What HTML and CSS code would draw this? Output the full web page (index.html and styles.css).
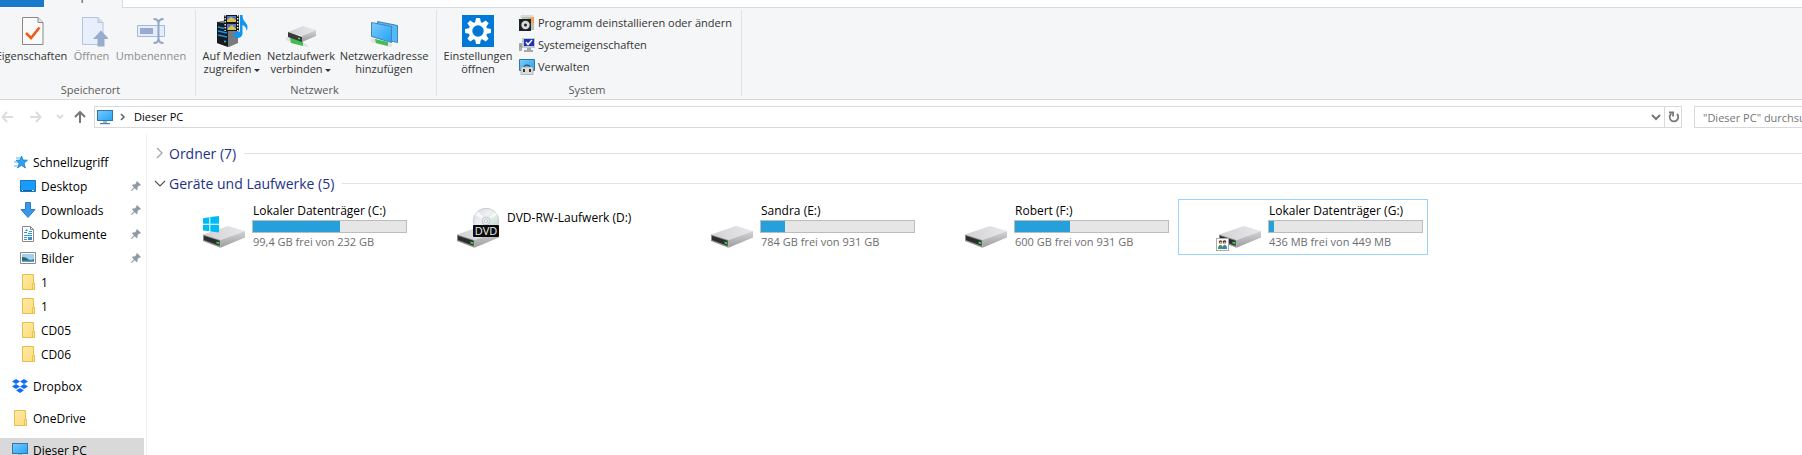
FILE: index.html
```html
<!DOCTYPE html>
<html lang="de">
<head>
  <meta charset="UTF-8">
  <meta name="viewport" content="width=device-width, initial-scale=1.0">
  <title>Dieser PC</title>
  <link rel="stylesheet" href="styles.css">
</head>
<body>
  <!-- shared icons -->
  <svg class="defs" aria-hidden="true">
    <defs>
      <linearGradient id="gTop" x1="0" y1="0" x2="1" y2="0"><stop offset="0" stop-color="#d2d2d5"/><stop offset="1" stop-color="#e8e8ea"/></linearGradient>
      <linearGradient id="gSide" x1="0" y1="0" x2="0" y2="1"><stop offset="0" stop-color="#d4d4d6"/><stop offset="1" stop-color="#9d9da0"/></linearGradient>
      <linearGradient id="gBlue" x1="0" y1="0" x2="1" y2="1"><stop offset="0" stop-color="#7cc9fb"/><stop offset="1" stop-color="#22a5f7"/></linearGradient>
      <linearGradient id="gFolder" x1="0" y1="0" x2="1" y2="1"><stop offset="0" stop-color="#ffeaa5"/><stop offset="1" stop-color="#fbdc7c"/></linearGradient>
      <linearGradient id="gDisc" x1="0" y1="0" x2="1" y2="1"><stop offset="0" stop-color="#d5dade"/><stop offset=".4" stop-color="#eef0f2"/><stop offset=".6" stop-color="#d9eee2"/><stop offset="1" stop-color="#c6c9cf"/></linearGradient>
    </defs>
    <symbol id="drive" viewBox="0 0 42 22">
      <path d="M0 8.400L25 0l17 5-24.500 9z" fill="url(#gTop)"/>
      <path d="M17.500 14L42 5v6.500L17.500 21.800z" fill="url(#gSide)"/>
      <path d="M0 8.400l17.500 5.600v7.800L0 15z" fill="#8c8c8e"/>
      <path d="M1 9.700l15.500 5v5L1 14z" fill="#2c2d30"/>
      <path d="M13.500 15.500l2.500.8v2l-2.500-.8z" fill="#2fe03a"/>
    </symbol>
    <symbol id="pc" viewBox="0 0 16 16">
      <rect x=".5" y="1.500" width="15" height="10" fill="url(#gBlue)" stroke="#3477a5"/>
      <path d="M6 12h4v2H6z" fill="#a8b7c4"/><path d="M3 14h10v1.200H3z" fill="#4a7fa6"/>
    </symbol>
    <symbol id="folder" viewBox="0 0 16 16">
      <path d="M2.500.5h11v9h1v6h-12z" fill="url(#gFolder)" stroke="#e6c04a"/>
      <path d="M12.500 15.500V10l1-1 1 1v5.500z" fill="#ffe694" stroke="#e6c04a"/>
    </symbol>
    <symbol id="pin" viewBox="0 0 10 10">
      <path d="M6 0l4 4-1 .8-.8-.2-1.700 1.700.1 2-.9.900-2-2L.6 10H0v-.6l2.800-3.100-2-2 .9-.9 2 .1 1.700-1.700L5.200 1z" fill="#8f9aa4"/>
    </symbol>
  </svg>

  <header class="tabs">
    <div class="tab-file"></div>
    <div class="tab-active"><span>Computer</span></div>
    <div class="tab-rest"></div>
  </header>

  <section class="ribbon">
    <div class="group group-location">
      <div class="tools">
        <button class="tool tool-properties">
          <svg width="32" height="32" viewBox="0 0 32 32"><path d="M6.500 2.500H22l5 5v22H6.500z" fill="#fafafa" stroke="#8a8a8a"/><path d="M22 2.500v5h5" fill="#e4e4e4" stroke="#8a8a8a"/><path d="M10 18l5 5 8.500-10.500" fill="none" stroke="#f05a14" stroke-width="2.600"/></svg>
          Eigenschaften
        </button>
        <button class="tool tool-open" disabled>
          <svg width="32" height="32" viewBox="0 0 32 32"><path d="M6.500 2.500H22l5 5v22H6.500z" fill="#e7effc" stroke="#b4c3df"/><path d="M22 2.500v5h5" fill="#d4dff1" stroke="#b4c3df"/><path d="M25 15.500l8 8.500h-4.500v7.500h-7V24H17z" fill="#9aacce"/></svg>
          Öffnen
        </button>
        <button class="tool tool-rename" disabled>
          <svg width="32" height="32" viewBox="0 0 32 32"><path d="M2.500 10.500h27v11h-27z" fill="#e4edfb" stroke="#a5b8da"/><path d="M5 13h13v6H5z" fill="#9aacce"/><path d="M18.500 4q5 0 5 4.500v15q0 4.500-5 4.500M28.500 4q-5 0-5 4.500v15q0 4.500 5 4.500" fill="none" stroke="#94a6c8" stroke-width="2"/></svg>
          Umbenennen
        </button>
      </div>
      <div class="group-name">Speicherort</div>
    </div>

    <div class="group group-network">
      <div class="tools">
        <button class="tool tool-media">
          <svg width="32" height="32" viewBox="0 0 32 32"><path d="M1 7l10-2 11 3v20l-9 4-12-4z" fill="#777a7e"/><path d="M1 7l11 2v23L1 28z" fill="#17191c"/><path d="M2 12l9 2M2 16l9 2M2 20l9 2" stroke="#1694e8" stroke-width="1.400"/><circle cx="9" cy="26.500" r="1" fill="#33bfff"/><path d="M8 0h15v16H8z" fill="#16171b"/><path d="M11 1h9v6h-9zM11 9h9v6h-9z" fill="#5577c4"/><path d="M11 5l4-3 5 3v2h-9zM12 13l4-3 4 4v1h-8z" fill="#dcc24d"/><path d="M9.200 0v16M21.700 0v16" stroke="#fff" stroke-width="1.300" stroke-dasharray="1.500 1.500"/><path d="M24 0h2.500q0 5 3 7.500 3.500 4 1 8.500 0-4.500-4-6v9q-1 4-5 4-4-.3-4-3.300 1-3.700 6.500-3.200z" fill="#1296ed"/></svg>
          <span>Auf Medien<br>zugreifen <i class="caret"></i></span>
        </button>
        <button class="tool tool-netdrive">
          <svg width="32" height="32" viewBox="0 0 32 32"><path d="M1 22l5 1 15 6 3 3-4-.5-15-4.500-4-2z" fill="#dfe2e0"/><path d="M5 22.500l13 2.500v6l-12-3z" fill="#43bd52"/><path d="M3 17l15-6 13 4-14 6z" fill="url(#gTop)"/><path d="M3 17l14 5v5L3 22z" fill="#38393c"/><path d="M17 21l14-6v6l-14 6z" fill="url(#gSide)"/><path d="M13 22.500l2 .6v1.500l-2-.6z" fill="#39e847"/></svg>
          <span>Netzlaufwerk<br>verbinden <i class="caret"></i></span>
        </button>
        <button class="tool tool-netaddr">
          <svg width="32" height="32" viewBox="0 0 32 32"><path d="M9.500 6.500l20 4v17l-20-5z" fill="#55b9f6" stroke="#4385b5"/><path d="M3.500 7.500l20 4v16l-20-6z" fill="url(#gBlue)" stroke="#4385b5"/><path d="M2 24l5 0 17 5v3l-5-.5-15-4z" fill="#dfe2e0"/><path d="M7 24l13 3v4l-12-3z" fill="#43bd52"/></svg>
          <span>Netzwerkadresse<br>hinzufügen</span>
        </button>
      </div>
      <div class="group-name">Netzwerk</div>
    </div>

    <div class="group group-system">
      <div class="tools">
        <button class="tool tool-settings">
          <svg width="32" height="32" viewBox="0 0 32 32"><path d="M0 0h32v32H0z" fill="#0078d7"/><g fill="#fff"><path id="tooth" d="M14 3h4l1 5h-6z"/><use href="#tooth" transform="rotate(45 16 16)"/><use href="#tooth" transform="rotate(90 16 16)"/><use href="#tooth" transform="rotate(135 16 16)"/><use href="#tooth" transform="rotate(180 16 16)"/><use href="#tooth" transform="rotate(225 16 16)"/><use href="#tooth" transform="rotate(270 16 16)"/><use href="#tooth" transform="rotate(315 16 16)"/></g><circle cx="16" cy="16" r="7.500" fill="none" stroke="#fff" stroke-width="3.600"/></svg>
          <span>Einstellungen<br>öffnen</span>
        </button>
        <div class="small-tools">
          <button class="small-tool">
            <svg width="16" height="16" viewBox="0 0 16 16"><path d="M2 0h12l1 3H1z" fill="#d7dbd7"/><path d="M3 2h12v13H3z" fill="#b9c4b5"/><path d="M9 3l6-1v8z" fill="#eda35d"/><path d="M0 4h12v12H0z" fill="#1f2022"/><circle cx="6.500" cy="10" r="4.200" fill="#d9dcdf"/><circle cx="6.500" cy="10" r="1.500" fill="#222"/></svg>
            Programm deinstallieren oder ändern
          </button>
          <button class="small-tool">
            <svg width="16" height="16" viewBox="0 0 16 16"><path d="M0 6h3v8H0z" fill="#a9acaf"/><path d="M.500 9h2" stroke="#38a345"/><path d="M3 1h13v10H3z" fill="#c4c6c8"/><path d="M5 2h10v7H5z" fill="#1e32b4"/><path d="M7 5l2 2.500L13 3" fill="none" stroke="#fff" stroke-width="1.500"/><path d="M8 11h4v2h2v2H5v-2h3z" fill="#a5a7aa"/></svg>
            Systemeigenschaften
          </button>
          <button class="small-tool">
            <svg width="16" height="16" viewBox="0 0 16 16"><path d="M.5.500h15v11H.500z" fill="url(#gBlue)" stroke="#3477a5"/><path d="M5 8q0-2 3-2t3 2" fill="none" stroke="#333"/><path d="M2 8h12v7.500H2z" fill="#dcdcda" stroke="#9b9b99" stroke-width=".6"/><path d="M4 10h2v3H4zM10 10h2v3h-2z" fill="#333"/></svg>
            Verwalten
          </button>
        </div>
      </div>
      <div class="group-name">System</div>
    </div>
  </section>

  <nav class="address-row">
    <div class="history">
      <button aria-label="Zurück"><svg width="12" height="12" viewBox="0 0 12 12"><path d="M6 1L1.500 6 6 11M2 6h10" fill="none" stroke="#dcdcdc" stroke-width="2"/></svg></button>
      <button aria-label="Vorwärts"><svg width="12" height="12" viewBox="0 0 12 12"><path d="M6 1l4.500 5L6 11M0 6h10" fill="none" stroke="#dcdcdc" stroke-width="2"/></svg></button>
      <button aria-label="Verlauf"><svg width="12" height="12" viewBox="0 0 12 12"><path d="M3 4l3 3 3-3" fill="none" stroke="#dcdcdc" stroke-width="1.800"/></svg></button>
      <button aria-label="Nach oben"><svg width="12" height="12" viewBox="0 0 12 12"><path d="M1 6l5-5 5 5M6 1.500V12" fill="none" stroke="#777" stroke-width="2"/></svg></button>
    </div>
    <div class="address">
      <svg width="16" height="16"><use href="#pc"/></svg>
      <svg width="6" height="8" viewBox="0 0 6 8"><path d="M1 1l3 3-3 3" fill="none" stroke="#666" stroke-width="1.600"/></svg>
      <a href="#">Dieser PC</a>
      <button class="address-drop" aria-label="Verlauf anzeigen"><svg width="10" height="8" viewBox="0 0 10 8"><path d="M1 2l4 4 4-4" fill="none" stroke="#777" stroke-width="2"/></svg></button>
      <button class="address-reload" aria-label="Aktualisieren"><svg width="12" height="12" viewBox="0 0 12 12"><path d="M3.500 2.500a4.300 4.300 0 1 0 5.500.5" fill="none" stroke="#777" stroke-width="1.800"/><path d="M1 1.400h4.100v4.100" fill="none" stroke="#777" stroke-width="1.800"/></svg></button>
    </div>
    <input class="search" type="text" placeholder="&quot;Dieser PC&quot; durchsuchen" aria-label="Dieser PC durchsuchen">
  </nav>

  <div class="body">
    <aside class="sidebar">
      <ul>
        <li><a href="#"><svg width="16" height="16" viewBox="0 0 16 16"><path d="M9.500 2l1.600 4 4.400.2-3.400 3 1.300 4.800-3.900-2.700L5.500 14l1.600-4.600L4 6.300l4-.2z" fill="#2ba3ee" stroke="#1a7fc6" stroke-width=".8"/><path d="M4 4h4M2 8h4M2 12h3.500" stroke="#57b6f0"/></svg>Schnellzugriff</a></li>
        <li class="sub"><a href="#"><svg width="16" height="16" viewBox="0 0 16 16"><path d="M.5 2.500h15v11H.500z" fill="#1a9bfb" stroke="#1477c0"/><path d="M1 12.500h14" stroke="#115f9b"/><path d="M2 12.500h1M12 12.500h2" stroke="#fff"/></svg>Desktop</a><svg class="pin"><use href="#pin"/></svg></li>
        <li class="sub"><a href="#"><svg width="16" height="16" viewBox="0 0 16 16"><path d="M5.500.5h5v7h4.500L8 15.500 1 7.500h4.500z" fill="#3b97e8" stroke="#2a7cc9"/></svg>Downloads</a><svg class="pin"><use href="#pin"/></svg></li>
        <li class="sub"><a href="#"><svg width="16" height="16" viewBox="0 0 16 16"><path d="M2.500.5h8l3 3v12h-11z" fill="#fff" stroke="#8a8a8a"/><path d="M10.500.5v3h3" fill="none" stroke="#8a8a8a"/><path d="M4 6.500h3M9 5.500h3M8 7.500h4M4 9.500h8M4 11.500h3M4 13.500h3" stroke="#2d93d3"/><path d="M5 5l1.500-2L8 5M8 11h4v3H8z" fill="#3b8fc8"/></svg>Dokumente</a><svg class="pin"><use href="#pin"/></svg></li>
        <li class="sub"><a href="#"><svg width="16" height="16" viewBox="0 0 16 16"><path d="M.5 2.500h15v11H.500z" fill="#fff" stroke="#8a8a8a"/><path d="M2 4h12v8H2z" fill="#9fd0f2"/><path d="M2 7q4 0 6 2t6 0v3H2z" fill="#2c6868"/><path d="M2 10.500h12V12H2z" fill="#5a9ccc"/></svg>Bilder</a><svg class="pin"><use href="#pin"/></svg></li>
        <li class="sub"><a href="#"><svg width="16" height="16"><use href="#folder"/></svg>1</a></li>
        <li class="sub"><a href="#"><svg width="16" height="16"><use href="#folder"/></svg>1</a></li>
        <li class="sub"><a href="#"><svg width="16" height="16"><use href="#folder"/></svg>CD05</a></li>
        <li class="sub"><a href="#"><svg width="16" height="16"><use href="#folder"/></svg>CD06</a></li>
      </ul>
      <ul>
        <li><a href="#"><svg width="16" height="16" viewBox="0 0 16 16"><path d="M4 1l4 2.500L4 6 0 3.500zM12 1l4 2.500L12 6 8 3.500zM4 6l4 2.500L4 11 0 8.500zM12 6l4 2.500-4 2.500-4-2.500zM8 10l4 2.300L8 15l-4-2.700z" fill="#0f6cf9"/></svg>Dropbox</a></li>
      </ul>
      <ul>
        <li><a href="#"><svg width="16" height="16"><use href="#folder"/></svg>OneDrive</a></li>
      </ul>
      <ul>
        <li class="selected"><a href="#"><svg width="16" height="16"><use href="#pc"/></svg>Dieser PC</a></li>
      </ul>
    </aside>

    <main class="content">
      <h2><svg width="12" height="12" viewBox="0 0 12 12"><path d="M3 1l5 5-5 5" fill="none" stroke="#a0a0a0" stroke-width="1.200"/></svg>Ordner (7)</h2>
      <h2><svg width="12" height="12" viewBox="0 0 12 12"><path d="M1 4l5 5 5-5" fill="none" stroke="#555" stroke-width="1.200"/></svg>Geräte und Laufwerke (5)</h2>

      <div class="drives">
        <div class="drive">
          <svg width="48" height="48" viewBox="0 0 48 48"><use href="#drive" x="3" y="23" width="42" height="22"/><path d="M3 15.200l6.300-.9v6.500H3zM10.300 14.100L19 13v7.800h-8.700zM3 21.800h6.300v6.500L3 27.400zM10.300 21.800H19V29.500l-8.700-1.100z" fill="#00bcf2"/></svg>
          <div class="info">
            <label for="c">Lokaler Datenträger (C:)</label>
            <progress id="c" value="57" max="100"></progress>
            <small>99,4 GB frei von 232 GB</small>
          </div>
        </div>
        <div class="drive drive-dvd">
          <svg width="48" height="48" viewBox="0 0 48 48"><use href="#drive" x="3" y="23" width="42" height="22"/><circle cx="32" cy="18" r="12.700" fill="url(#gDisc)" stroke="#b8bcc0" stroke-width=".7"/><path d="M32 18L21 12l3-4zM32 18l9-9 2 3z" fill="#fff" opacity=".7"/><circle cx="32" cy="18" r="4" fill="#e9ebed" stroke="#b5b9bd" stroke-width=".7"/><circle cx="32" cy="18" r="1.600" fill="#fff" stroke="#aaa" stroke-width=".6"/><rect x="19" y="22" width="26" height="12" rx="1" fill="#0c0c0c"/><text class="dvd-text" x="32" y="32" text-anchor="middle">DVD</text></svg>
          <div class="info">
            <span>DVD-RW-Laufwerk (D:)</span>
          </div>
        </div>
        <div class="drive">
          <svg width="48" height="48" viewBox="0 0 48 48"><use href="#drive" x="3" y="23" width="42" height="22"/></svg>
          <div class="info">
            <label for="e">Sandra (E:)</label>
            <progress id="e" value="16" max="100"></progress>
            <small>784 GB frei von 931 GB</small>
          </div>
        </div>
        <div class="drive">
          <svg width="48" height="48" viewBox="0 0 48 48"><use href="#drive" x="3" y="23" width="42" height="22"/></svg>
          <div class="info">
            <label for="f">Robert (F:)</label>
            <progress id="f" value="36" max="100"></progress>
            <small>600 GB frei von 931 GB</small>
          </div>
        </div>
        <div class="drive focused">
          <svg width="48" height="48" viewBox="0 0 48 48"><use href="#drive" x="3" y="23" width="42" height="22"/><rect x=".5" y="35.500" width="12" height="12" fill="#fff" stroke="#aaa"/><circle cx="4.500" cy="39" r="1.800" fill="#6b4a33"/><circle cx="8.500" cy="39" r="1.800" fill="#3e3128"/><circle cx="4.700" cy="40" r="1.200" fill="#dfae88"/><circle cx="8.700" cy="40" r="1.200" fill="#dfae88"/><path d="M2 46q0-4 2.500-4T7 46z" fill="#3f9363"/><path d="M6.500 46q0-4 2.300-4t2.200 4z" fill="#3c7fb8"/></svg>
          <div class="info">
            <label for="g">Lokaler Datenträger (G:)</label>
            <progress id="g" value="3" max="100"></progress>
            <small>436 MB frei von 449 MB</small>
          </div>
        </div>
      </div>
    </main>
  </div>
</body>
</html>
```
FILE: styles.css
```css
* {
  box-sizing: border-box;
}
html, body {
  height: 100%;
}
body {
  margin: 0;
  display: flex;
  flex-direction: column;
  overflow: hidden;
  background: #fff;
  color: #000;
  font-family: "Open Sans", "Noto Sans", sans-serif;
  font-size: 11px;
}
button {
  font: inherit;
  color: inherit;
  background: none;
  border: none;
  padding: 0;
}
a {
  color: inherit;
  text-decoration: none;
}
svg {
  display: block;
  flex: none;
}
.defs {
  position: absolute;
  width: 0;
  height: 0;
}

/* tab strip */
.tabs {
  display: flex;
  flex: none;
  height: 8px;
}
.tab-file {
  width: 44px;
  height: 7px;
  background: #1979ca;
}
.tab-active {
  width: 79px;
  display: flex;
  justify-content: center;
  align-items: flex-end;
  overflow: hidden;
  background: #f5f6f7;
  border-right: 1px solid #dadbdc;
  color: #333;
}
.tab-active span {
  line-height: 16px;
  padding-bottom: 4px;
}
.tab-rest {
  flex: 1;
  border-bottom: 1px solid #dadbdc;
}

/* ribbon */
.ribbon {
  display: flex;
  flex: none;
  padding: 2px 0 3px;
  background: #f5f6f7;
  border-bottom: 1px solid #d5d6d8;
  color: #333;
}
.group {
  display: flex;
  flex-direction: column;
  justify-content: space-between;
  height: 86px;
  border-right: 1px solid #dfe1e3;
}
.group-location {
  margin-left: -14px;
  width: 210px;
  padding-left: 7px;
}
.group-network {
  width: 241px;
  padding-left: 4px;
}
.group-system {
  width: 305px;
  padding-left: 3px;
}
.tools {
  display: flex;
}
.tool {
  display: flex;
  flex-direction: column;
  align-items: center;
  gap: 2px;
  padding-top: 5px;
  line-height: 13px;
  text-align: center;
  white-space: nowrap;
}
.tool:disabled {
  color: #8d8d8d;
}
.tool-properties {
  width: 77px;
}
.tool-open {
  width: 43px;
}
.tool-rename {
  width: 76px;
}
.tool-media {
  width: 64px;
}
.tool-netdrive {
  width: 74px;
}
.tool-netaddr {
  width: 92px;
}
.tool-settings {
  width: 76px;
}
.caret {
  display: inline-block;
  border: 3px solid transparent;
  border-top-color: #333;
  border-bottom: none;
  vertical-align: middle;
}
.small-tools {
  display: flex;
  flex-direction: column;
  padding: 2px 0 0 3px;
}
.small-tool {
  display: flex;
  align-items: center;
  gap: 3px;
  height: 22px;
  line-height: 14px;
  white-space: nowrap;
}
.group-name {
  padding-right: 7px;
  line-height: 12px;
  text-align: center;
  color: #5a5a5a;
}

/* address bar */
.address-row {
  display: flex;
  flex: none;
  align-items: center;
  padding: 6px 0 6px 1px;
}
.history {
  display: flex;
  gap: 12px;
  width: 93px;
}
.history button:nth-child(2) {
  margin-left: 5px;
}
.history button:last-child {
  margin-left: -4px;
}
.address {
  display: flex;
  flex: 1;
  align-items: center;
  height: 22px;
  padding-left: 2px;
  border: 1px solid #d9d9d9;
  line-height: 14px;
}
.address > svg + svg {
  margin: 0 8px 0 7px;
}
.address a {
  flex: 1;
}
.address-drop {
  width: 13px;
}
.address-reload {
  align-self: stretch;
  width: 17px;
  padding-left: 3px;
  border-left: 1px solid #d9d9d9;
}
.search {
  flex: none;
  width: 180px;
  height: 22px;
  margin: 0 -72px 0 12px;
  padding: 0 8px;
  border: 1px solid #d9d9d9;
  border-radius: 0;
  font: inherit;
}
.search::placeholder {
  color: #767676;
}

/* body */
.body {
  display: flex;
  flex: 1;
  min-height: 0;
}
.sidebar {
  flex: none;
  width: 147px;
  padding: 16px 2px 0 0;
  border-right: 1px solid #f0f0f0;
  font-size: 12px;
}
.sidebar ul {
  margin: 0 0 8px;
  padding: 0;
  list-style: none;
}
.sidebar li {
  display: flex;
  align-items: center;
  justify-content: space-between;
  height: 24px;
  padding: 0 3px 0 12px;
}
.sidebar .sub {
  padding-left: 20px;
}
.sidebar a {
  display: flex;
  align-items: center;
  gap: 5px;
}
.sidebar .selected {
  background: #d9d9d9;
}
.pin {
  width: 10px;
  height: 10px;
}
.content {
  flex: 1;
  min-width: 0;
  padding: 4px 0 0 7px;
}
h2 {
  display: flex;
  align-items: center;
  height: 30px;
  margin: 0;
  color: #1e3287;
  font-size: 14px;
  font-weight: normal;
}
h2 svg {
  margin-right: 3px;
}
h2::after {
  content: "";
  flex: 1;
  height: 1px;
  margin-left: 8px;
  background: #e2e2e2;
}
.drives {
  display: flex;
  flex-wrap: wrap;
  gap: 4px;
  padding: 1px 0 0 8px;
}
.drive {
  display: flex;
  gap: 4px;
  width: 250px;
  height: 56px;
  padding: 3px 0 0 37px;
  border: 1px solid transparent;
}
.focused {
  border-color: #99d1ff;
}
.info {
  display: flex;
  flex-direction: column;
  width: 155px;
}
.info label,
.info span,
.info small {
  padding-left: 1px;
  font-size: 12px;
  line-height: 16px;
}
.info small {
  color: #6d6d6d;
  font-size: 11px;
}
.drive-dvd .info {
  padding-top: 7px;
}
progress {
  appearance: none;
  width: 100%;
  height: 13px;
  margin: 1px 0;
  border: 1px solid #bcbcbc;
}
progress::-webkit-progress-bar {
  background: #e6e6e6;
}
progress::-webkit-progress-value {
  background: #26a0da;
}
.dvd-text {
  fill: #eee;
  font-size: 11px;
}
```
